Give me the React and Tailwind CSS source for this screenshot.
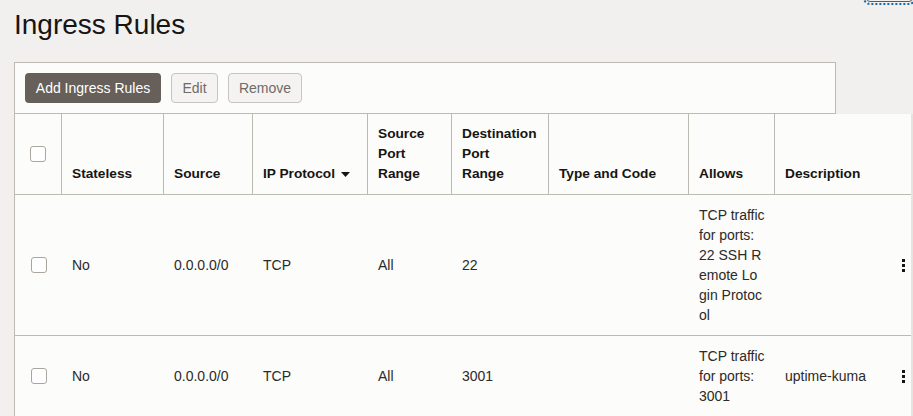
import React from 'react';

const cols = 'grid-cols-[47px_102px_89px_115px_84px_97px_140px_86px_114px_22px]';

const Checkbox = () => (
  <div className="w-4 h-4 rounded-[3px] border border-[#aaa59f] bg-white" />
);

const Kebab = () => (
  <div className="flex flex-col gap-[2px] pl-[13px]">
    <span className="block w-[3px] h-[3px] bg-[#161513]" />
    <span className="block w-[3px] h-[3px] bg-[#161513]" />
    <span className="block w-[3px] h-[3px] bg-[#161513]" />
  </div>
);

const headers = [
  ['Stateless'],
  ['Source'],
  ['IP Protocol'],
  ['Source', 'Port', 'Range'],
  ['Destination', 'Port', 'Range'],
  ['Type and Code'],
  ['Allows'],
];

const rows = [
  {
    stateless: 'No',
    source: '0.0.0.0/0',
    proto: 'TCP',
    srcPort: 'All',
    dstPort: '22',
    type: '',
    allows: ['TCP traffic', 'for ports:', '22 SSH R', 'emote Lo', 'gin Protoc', 'ol'],
    desc: '',
  },
  {
    stateless: 'No',
    source: '0.0.0.0/0',
    proto: 'TCP',
    srcPort: 'All',
    dstPort: '3001',
    type: '',
    allows: ['TCP traffic', 'for ports:', '3001'],
    desc: 'uptime-kuma',
  },
];

export default function App() {
  return (
    <div
      className="relative w-[913px] h-[416px] overflow-hidden bg-[#f1f0ee] text-[#161513]"
      style={{ fontFamily: '"Liberation Sans", Arial, sans-serif' }}
    >
      {/* focused control peeking in at the top right */}
      <div className="absolute top-[-29px] left-[866px] w-[47px] h-[31px] rounded-[4px] border border-[#5f5a56] outline-2 outline-dotted outline-[#1769a8] outline-offset-[1px]" />

      <h1 className="pt-[9px] pl-[14px] text-[28px] leading-[32px] font-normal mb-[21px]">
        Ingress Rules
      </h1>

      {/* toolbar */}
      <div className="ml-[14px] w-[822px] h-[52px] border border-[#bdb9b3] bg-[#fcfcfa] flex items-center gap-[10px] px-[10px]">
        <button className="w-[136px] h-[30px] rounded-[4px] bg-[#675f5a] text-white text-[14px] flex items-center justify-center">
          Add Ingress Rules
        </button>
        <button className="w-[47px] h-[30px] rounded-[4px] border border-[#c8c4be] bg-[#f4f3f1] text-[#6f6b67] text-[14px] flex items-center justify-center">
          Edit
        </button>
        <button className="w-[74px] h-[30px] rounded-[4px] border border-[#c8c4be] bg-[#f4f3f1] text-[#6f6b67] text-[14px] flex items-center justify-center">
          Remove
        </button>
      </div>

      {/* table */}
      <div className="flex">
        <div className="ml-[14px] w-[897px] border-l border-[#bdb9b3] bg-[#fcfcfa]">
          <div className={`grid ${cols} h-[81px] border-b border-[#bdb9b3] text-[13.7px] font-bold leading-[20px]`}>
            <div className="border-r border-[#bdb9b3] flex items-center justify-center">
              <Checkbox />
            </div>
            {headers.map((h, i) => (
              <div key={i} className="border-r border-[#bdb9b3] flex flex-col justify-end pl-[10px] pb-[10px]">
                {h.map((l, j) => (
                  <span key={j} className="flex items-center gap-[6px] whitespace-nowrap">
                    {l}
                    {l === 'IP Protocol' && (
                      <svg width="9" height="5" viewBox="0 0 9 5">
                        <path d="M0 0h9L4.5 5z" fill="#161513" />
                      </svg>
                    )}
                  </span>
                ))}
              </div>
            ))}
            <div className="col-span-2 flex flex-col justify-end pl-[10px] pb-[10px]">Description</div>
          </div>

          {rows.map((r, i) => (
            <div key={i} className={`grid ${cols} border-b border-[#bdb9b3] text-[14px] leading-[20px] text-[#2d2a27]`}>
              <div className="flex items-center justify-center">
                <Checkbox />
              </div>
              <div className="flex items-center pl-[10px]">{r.stateless}</div>
              <div className="flex items-center pl-[10px]">{r.source}</div>
              <div className="flex items-center pl-[10px]">{r.proto}</div>
              <div className="flex items-center pl-[10px]">{r.srcPort}</div>
              <div className="flex items-center pl-[10px]">{r.dstPort}</div>
              <div className="flex items-center pl-[10px]">{r.type}</div>
              <div className="flex flex-col justify-center pl-[10px] py-[10px]">
                {r.allows.map((l, j) => (
                  <span key={j} className="whitespace-nowrap">{l}</span>
                ))}
              </div>
              <div className="flex items-center pl-[10px] whitespace-nowrap">{r.desc}</div>
              <div className="flex items-center">
                <Kebab />
              </div>
            </div>
          ))}
        </div>
        <div className="w-[2px] bg-[#e6e4e1]" />
      </div>
    </div>
  );
}
